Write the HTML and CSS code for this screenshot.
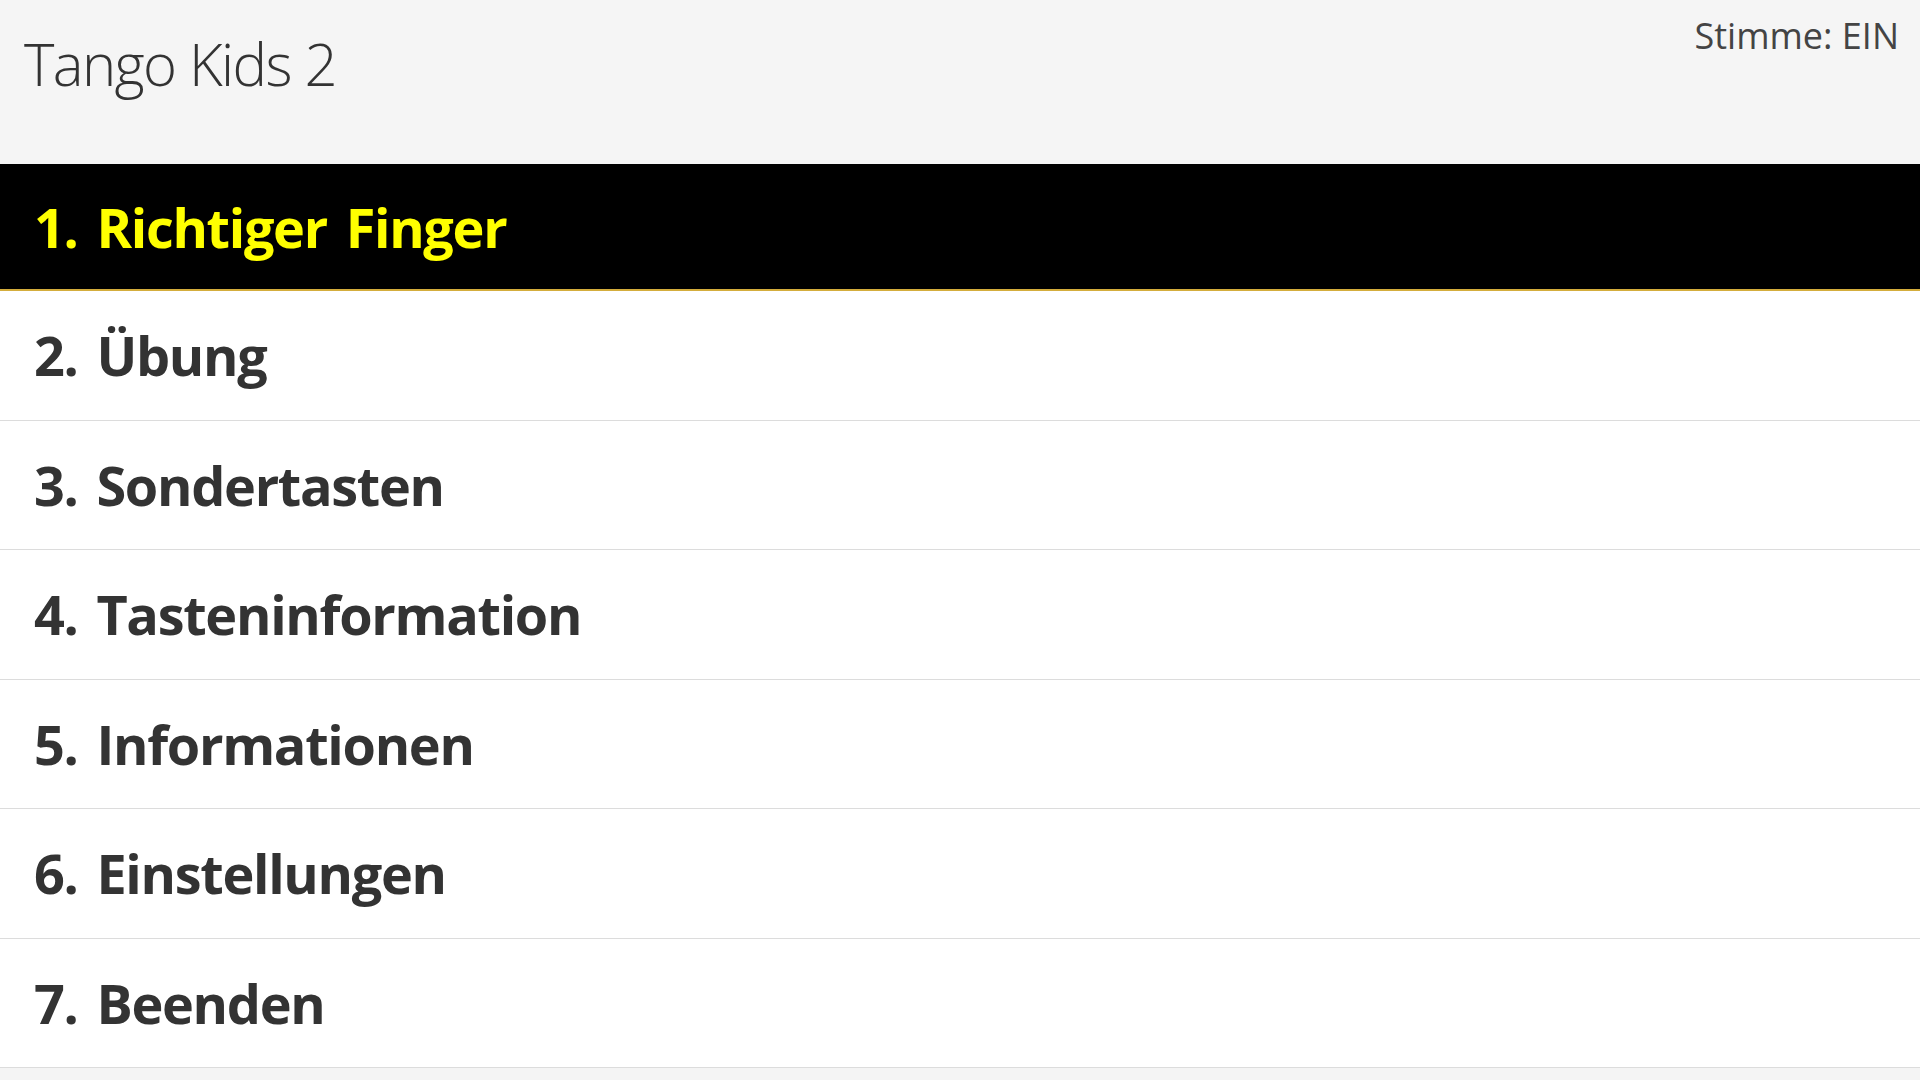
FILE: index.html
```html
<!DOCTYPE html>
<html lang="de">
<head>
<meta charset="utf-8">
<title>Tango Kids 2</title>
<link rel="stylesheet" href="styles.css">
</head>
<body>
<div class="app">
  <header class="topbar">
    <h1 class="title">Tango Kids 2</h1>
    <div class="voice">Stimme: EIN</div>
  </header>
  <ul class="menu">
    <li class="item active">1. Richtiger Finger</li>
    <li class="item">2. Übung</li>
    <li class="item">3. Sondertasten</li>
    <li class="item">4. Tasteninformation</li>
    <li class="item">5. Informationen</li>
    <li class="item">6. Einstellungen</li>
    <li class="item">7. Beenden</li>
  </ul>
</div>
</body>
</html>
```
FILE: styles.css
```css
html, body {
  margin: 0;
  padding: 0;
  height: 100%;
}
body {
  background: #f4f4f4;
  font-family: "Open Sans", "Noto Sans", "Liberation Sans", sans-serif;
  color: #333333;
}
.app {
  display: flex;
  flex-direction: column;
  height: 100%;
}
.topbar {
  height: 164px;
  box-sizing: border-box;
  display: flex;
  justify-content: space-between;
  align-items: flex-start;
  background: #f5f5f5;
  padding: 0 21px 0 24px;
}
.title {
  margin: 24px 0 0 0;
  font-weight: 300;
  font-size: 58px;
  line-height: 80px;
  color: #333333;
  letter-spacing: -1.6px;
}
.voice {
  margin-top: 11px;
  font-size: 36px;
  line-height: 50px;
  color: #444444;
}
.menu {
  list-style: none;
  margin: 0;
  padding: 0;
  background: #ffffff;
}
.item {
  box-sizing: border-box;
  height: 129.5px;
  display: flex;
  align-items: center;
  padding-left: 34px;
  font-weight: 700;
  font-size: 54px;
  color: #333333;
  border-bottom: 1px solid #dcdcdc;
  letter-spacing: -1.3px;
  word-spacing: 6px;
}
.item.active {
  height: 127px;
  background: #000000;
  color: #ffff00;
  border-bottom: 2px solid #d4ad3c;
}
```
